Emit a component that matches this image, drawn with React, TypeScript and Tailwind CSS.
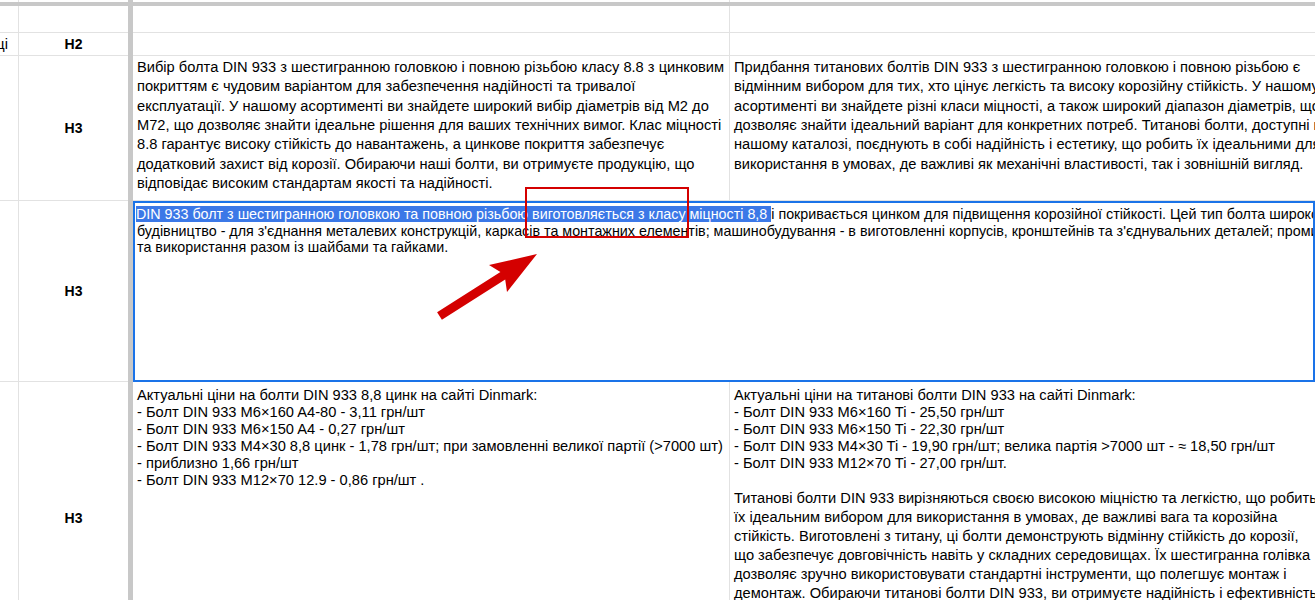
import type { ReactNode } from 'react';

const grid = 'border-[#e2e2e2]';

const topLeftText = [
  'Вибір болта DIN 933 з шестигранною головкою і повною різьбою класу 8.8 з цинковим',
  'покриттям є чудовим варіантом для забезпечення надійності та тривалої',
  'експлуатації. У нашому асортименті ви знайдете широкий вибір діаметрів від М2 до',
  'М72, що дозволяє знайти ідеальне рішення для ваших технічних вимог. Клас міцності',
  '8.8 гарантує високу стійкість до навантажень, а цинкове покриття забезпечує',
  'додатковий захист від корозії. Обираючи наші болти, ви отримуєте продукцію, що',
  'відповідає високим стандартам якості та надійності.',
];

const topRightText = [
  'Придбання титанових болтів DIN 933 з шестигранною головкою і повною різьбою є',
  'відмінним вибором для тих, хто цінує легкість та високу корозійну стійкість. У нашому',
  'асортименті ви знайдете різні класи міцності, а також широкий діапазон діаметрів, що',
  'дозволяє знайти ідеальний варіант для конкретних потреб. Титанові болти, доступні в',
  'нашому каталозі, поєднують в собі надійність і естетику, що робить їх ідеальними для',
  'використання в умовах, де важливі як механічні властивості, так і зовнішній вигляд.',
];

const pricesZinc = [
  'Актуальні ціни на болти DIN 933 8,8 цинк на сайті Dinmark:',
  '- Болт DIN 933 M6×160 A4-80 - 3,11 грн/шт',
  '- Болт DIN 933 M6×150 A4 - 0,27 грн/шт',
  '- Болт DIN 933 M4×30 8,8 цинк - 1,78 грн/шт; при замовленні великої партії (>7000 шт)',
  '- приблизно 1,66 грн/шт',
  '- Болт DIN 933 M12×70 12.9 - 0,86 грн/шт .',
];

const pricesTi = [
  'Актуальні ціни на титанові болти DIN 933 на сайті Dinmark:',
  '- Болт DIN 933 M6×160 Ti - 25,50 грн/шт',
  '- Болт DIN 933 M6×150 Ti - 22,30 грн/шт',
  '- Болт DIN 933 M4×30 Ti - 19,90 грн/шт; велика партія >7000 шт - ≈ 18,50 грн/шт',
  '- Болт DIN 933 M12×70 Ti - 27,00 грн/шт.',
  '\u00a0',
];

const tiParagraph = [
  'Титанові болти DIN 933 вирізняються своєю високою міцністю та легкістю, що робить',
  'їх ідеальним вибором для використання в умовах, де важливі вага та корозійна',
  'стійкість. Виготовлені з титану, ці болти демонструють відмінну стійкість до корозії,',
  'що забезпечує довговічність навіть у складних середовищах. Їх шестигранна голівка',
  'дозволяє зручно використовувати стандартні інструменти, що полегшує монтаж і',
  'демонтаж. Обираючи титанові болти DIN 933, ви отримуєте надійність і ефективність',
];

function Lines({ lines, leading }: { lines: string[]; leading: string }) {
  return (
    <>
      {lines.map((l, i) => (
        <div key={i} className={`whitespace-nowrap ${leading}`}>{l}</div>
      ))}
    </>
  );
}

// one sheet row: A | B | freeze | C | D
function Row({ h, b, c, d, border = true }: { h: string; b?: ReactNode; c?: ReactNode; d?: ReactNode; border?: boolean }) {
  const bb = border ? `border-b ${grid}` : '';
  return (
    <div className={`flex ${h}`}>
      <div className={`w-[19px] shrink-0 border-r ${grid} ${bb}`} />
      <div className={`w-[109px] shrink-0 flex items-center justify-center font-bold text-[14px] ${bb}`}>{b}</div>
      <div className="w-[5px] shrink-0 bg-[#c8c8c8]" />
      <div className={`w-[597px] shrink-0 overflow-hidden border-r ${grid} ${bb}`}>{c}</div>
      <div className={`flex-1 min-w-0 overflow-hidden ${bb}`}>{d}</div>
    </div>
  );
}

export default function App() {
  return (
    <div className="relative h-[600px] w-[1315px] overflow-hidden bg-white text-[14.67px] text-black" style={{ fontFamily: '"Liberation Sans", Arial, sans-serif' }}>
      <Row h="h-[2px]" border={false} />
      <div className="h-[4px] bg-[#c8c8c8]" />
      <Row h="h-[27px]" />
      <div className="flex h-[23px]">
        <div className={`w-[19px] shrink-0 overflow-hidden border-r border-b ${grid} flex items-center justify-end pr-[10px]`}>
          <span className="whitespace-nowrap">ці</span>
        </div>
        <div className={`w-[109px] shrink-0 flex items-center justify-center font-bold text-[14px] border-b ${grid}`}>H2</div>
        <div className="w-[5px] shrink-0 bg-[#c8c8c8]" />
        <div className={`w-[597px] shrink-0 border-r border-b ${grid}`} />
        <div className={`flex-1 border-b ${grid}`} />
      </div>
      <Row
        h="h-[145px]"
        b="H3"
        c={<div className="pl-[4px] pt-[2px]"><Lines lines={topLeftText} leading="leading-[19.33px]" /></div>}
        d={<div className="pl-[4px] pt-[2px]"><Lines lines={topRightText} leading="leading-[19.33px]" /></div>}
      />

      {/* row in edit mode */}
      <div className="flex h-[181px]">
        <div className={`w-[19px] shrink-0 border-r border-b ${grid}`} />
        <div className={`w-[109px] shrink-0 flex items-center justify-center font-bold text-[14px] border-b ${grid}`}>H3</div>
        <div className="w-[5px] shrink-0 bg-[#c8c8c8]" />
        <div className="flex-1 min-w-0 overflow-hidden border-2 border-[#1a73e8] pl-[1px] pt-[3px] text-[14.3px]">
          <div className="whitespace-nowrap leading-[16.5px]">
            <span className="bg-[#3b78e7] text-white">DIN 933 болт з шестигранною головкою та повною різьбою виготовляється з класу міцності 8,8 </span>
            і покривається цинком для підвищення корозійної стійкості. Цей тип болта широко застосовується в:
          </div>
          <div className="whitespace-nowrap leading-[16.5px] pl-[1px]">
            будівництво - для з'єднання металевих конструкцій, каркасів та монтажних елементів; машинобудування - в виготовленні корпусів, кронштейнів та з'єднувальних деталей; промисловому обладнанні
          </div>
          <div className="whitespace-nowrap leading-[16.5px] pl-[1px]">та використання разом із шайбами та гайками.</div>
        </div>
      </div>

      <Row
        h="h-[274px]"
        b="H3"
        c={<div className="pl-[4px] pt-[5px]"><Lines lines={pricesZinc} leading="leading-[17px]" /></div>}
        d={
          <div className="pl-[4px] pt-[5px]">
            <Lines lines={pricesTi} leading="leading-[17px]" />
            <Lines lines={tiParagraph} leading="leading-[19px]" />
          </div>
        }
      />

      {/* annotation overlay */}
      <div className="absolute left-[525px] top-[187px] h-[51px] w-[164px] border-2 border-[#d40000]" />
      <svg className="absolute left-0 top-0" width="1315" height="600" viewBox="0 0 1315 600">
        <polygon
          points="537,254 489,265 500.4,271.9 437.1,312.2 441.9,319.8 505.2,279.5 507,292"
          fill="#d40000"
        />
      </svg>
    </div>
  );
}
